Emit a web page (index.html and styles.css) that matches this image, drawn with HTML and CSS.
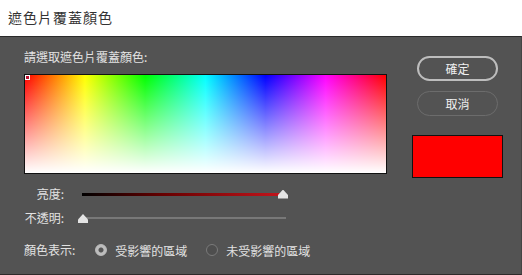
FILE: index.html
```html
<!DOCTYPE html>
<html lang="zh-Hant">
<head>
<meta charset="UTF-8">
<title>遮色片覆蓋顏色</title>
<link rel="stylesheet" href="styles.css">
</head>
<body>

<div class="titlebar">遮色片覆蓋顏色</div>

<div class="dialog">
  <div class="main">
    <div class="prompt">請選取遮色片覆蓋顏色:</div>
    <div class="picker">
      <div class="marker"></div>
    </div>

    <div class="row slider-row">
      <div class="label">亮度:</div>
      <div class="track bright">
        <div class="thumb" style="left: 201px"></div>
      </div>
    </div>
    <div class="row slider-row">
      <div class="label">不透明:</div>
      <div class="track opacity">
        <div class="thumb" style="left: 1px"></div>
      </div>
    </div>

    <div class="row radios">
      <div class="label left">顏色表示:</div>
      <label class="radio"><span class="dot on"></span>受影響的區域</label>
      <label class="radio"><span class="dot"></span>未受影響的區域</label>
    </div>
  </div>

  <div class="side">
    <button class="btn ok">確定</button>
    <button class="btn cancel">取消</button>
    <div class="swatch"></div>
  </div>
</div>

</body>
</html>
```

FILE: styles.css
```css
body {
    margin: 0;
    width: 522px;
    height: 275px;
    overflow: hidden;
    font-family: "Noto Sans CJK TC", "Noto Sans", sans-serif;
    font-size: 12px;
    background-color: #535353;
}
.titlebar {
    height: 36px;
    line-height: 34px;
    padding-left: 8px;
    background-color: #fff;
    color: #333;
    font-size: 14px;
    letter-spacing: 1px;
}
.dialog {
    display: flex;
    height: 237px;
    border-top: 1px solid #2a2a2a;
    border-bottom: 1px solid #2e2a2a;
    border-right: 1px solid #444;
    background-color: #535353;
    color: #e2e2e2;
}
.main { padding-left: 24px; width: 363px; }
.prompt { margin-top: 12px; line-height: 16px; height: 16px; }
.picker {
    position: relative;
    margin-top: 9px;
    width: 361px;
    height: 98px;
    border: 1px solid #111;
    background:
        linear-gradient(to bottom, rgba(255,255,255,0), #fff),
        linear-gradient(to right, #f00 0%, #ff0 16.6%, #0f0 33.3%, #0ff 50%, #00f 66.6%, #f0f 83.3%, #f00 100%);
}
.marker {
    position: absolute;
    left: 0;
    top: 0;
    width: 3px;
    height: 3px;
    border: 1px solid #fff;
    background-color: #c01030;
}
.row { display: flex; align-items: center; height: 16px; }
.slider-row { margin-top: 12px; }
.slider-row + .slider-row { margin-top: 8px; }
.label { width: 40px; text-align: right; line-height: 16px; white-space: nowrap; }
.track { position: relative; margin-left: 18px; }
.track.bright {
    width: 201px;
    height: 3px;
    background: linear-gradient(to right, #000, #600 40%, #c4151c);
}
.track.opacity {
    width: 204px;
    height: 2px;
    background-color: #787878;
}
.thumb {
    position: absolute;
    top: -3px;
    width: 10px;
    height: 9px;
    margin-left: -5px;
    background-color: #e4e4e4;
    clip-path: polygon(50% 0, 100% 62%, 100% 100%, 0 100%, 0 62%);
}
.radios { margin-top: 16px; }
.label.left { width: auto; text-align: left; }
.radio { display: flex; align-items: center; margin-left: 20px; }
.radio + .radio { margin-left: 19px; }
.dot {
    width: 10px;
    height: 10px;
    border-radius: 50%;
    border: 1px solid #7a7a7a;
    background-color: #4e4e4e;
    margin-right: 8px;
    box-sizing: content-box;
}
.dot.on {
    border-color: #bbb;
    background: radial-gradient(circle, #555 0 2px, #bdbdbd 3px);
}
.side {
    display: flex;
    flex-direction: column;
    align-items: flex-start;
    padding-left: 25px;
}
.btn {
    width: 81px;
    height: 25px;
    margin-left: 5px;
    border-radius: 13px;
    background: transparent;
    color: #f0f0f0;
    font-family: inherit;
    font-size: 12px;
    padding: 0;
}
.btn.ok { margin-top: 19px; border: 2px solid #bdbdbd; }
.btn.cancel { margin-top: 10px; border: 1px solid #6c6c6c; }
.swatch {
    margin-top: 19px;
    width: 89px;
    height: 41px;
    border: 1px solid #111;
    background-color: #f00;
}
```
